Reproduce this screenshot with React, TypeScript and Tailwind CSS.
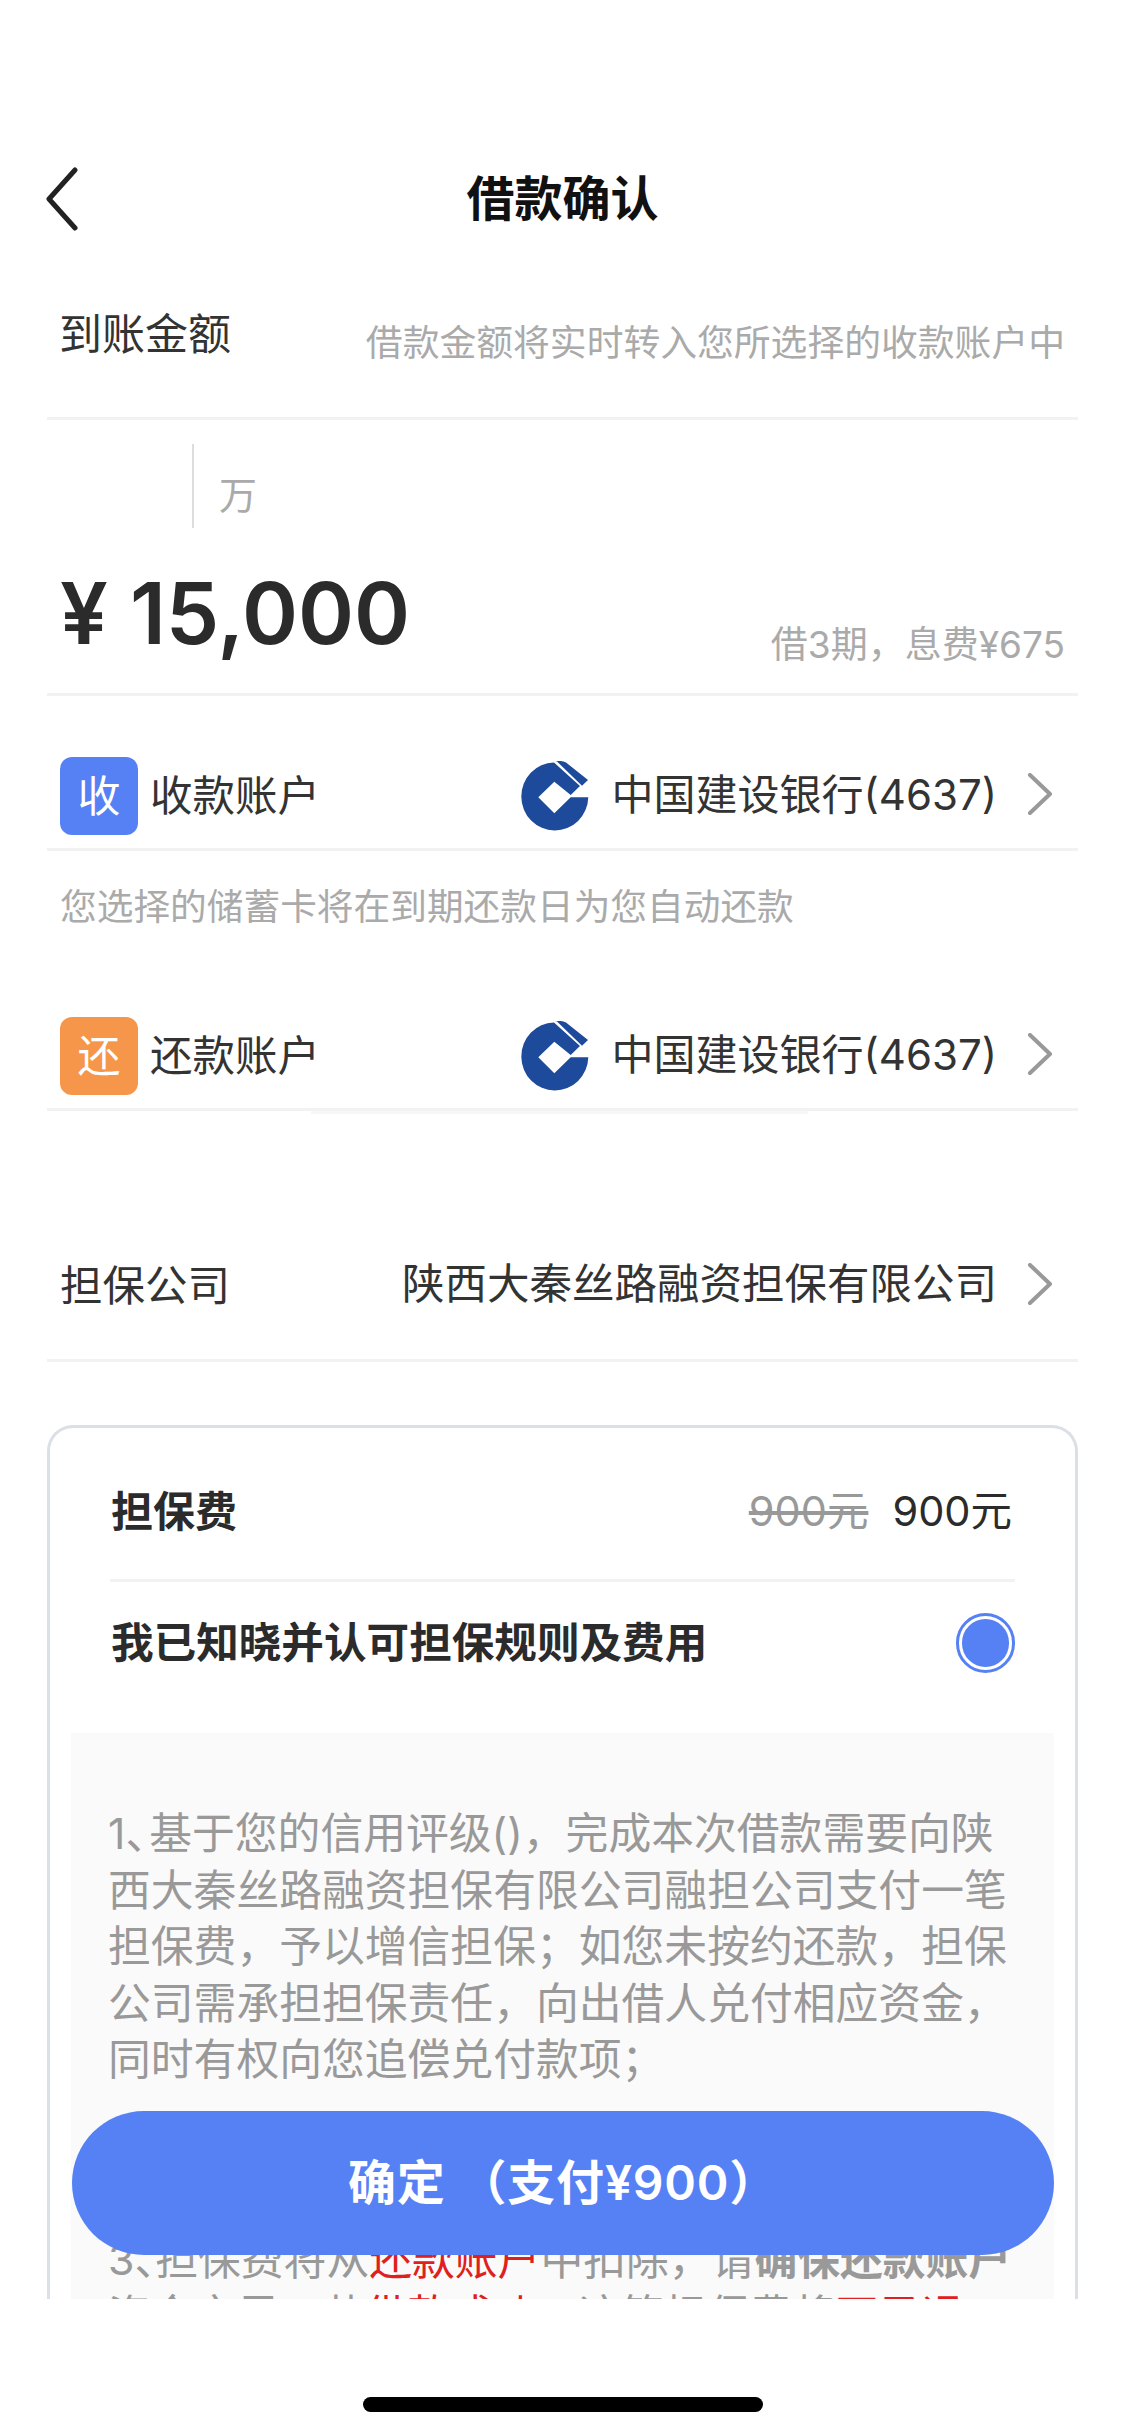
const cjk = "font-['Inter','Noto_Sans_CJK_SC',sans-serif]";

function Chevron() {
  return (
    <svg width="26" height="42" viewBox="0 0 26 42" fill="none" className="mb-[5px] shrink-0">
      <path d="M3 2l20 19L3 40" stroke="#999999" strokeWidth="4" strokeLinecap="round" strokeLinejoin="round" />
    </svg>
  );
}

function BankLogo() {
  return (
    <svg width="68" height="70" viewBox="0 0 68 70" className="shrink-0">
      <path
        fillRule="evenodd"
        fill="#1d4a9b"
        d="M67.3 36.3A33.5 34 0 1 1 33 1.5L59 25 49.7 34 33.3 20.7 17.3 36.3 33.3 52.3 49.7 36.3Z"
      />
      <path fill="#1d4a9b" d="M34 .5Q40-1 45 1.5L67 19 61 24.7 36 .5Z" />
    </svg>
  );
}

function Divider() {
  return <div className="h-[3px] bg-[#f2f2f2]" />;
}

function BankRow({ badge, badgeColor, label }: { badge: string; badgeColor: string; label: string }) {
  return (
    <div className="flex h-[104px] items-center pl-[13px] pr-[25px]">
      <span className={`flex h-[78px] w-[78px] items-center justify-center rounded-[12px] text-[43px] text-white ${badgeColor}`}>
        {badge}
      </span>
      <span className="ml-[12px] text-[42.5px] text-[#333333]">{label}</span>
      <div className="ml-auto flex items-center">
        <BankLogo />
        <span className="mb-[3px] ml-[22px] mr-[30px] text-[42px] leading-none text-[#333333]">中国建设银行(4637)</span>
        <Chevron />
      </div>
    </div>
  );
}

export default function App() {
  return (
    <div className={`relative h-[2435px] w-[1125px] overflow-hidden bg-white ${cjk}`}>
      <div className="h-[2299px] overflow-hidden">
        {/* Nav bar */}
        <header className="relative mt-[135px] flex h-[128px] items-center justify-center">
          <svg width="34" height="64" viewBox="0 0 34 64" fill="none" className="absolute left-[45px] top-[32px]">
            <path d="M30 3L4 32l26 29" stroke="#222222" strokeWidth="5" strokeLinecap="round" strokeLinejoin="round" />
          </svg>
          <h1 className="text-[48px] font-bold text-[#111111]">借款确认</h1>
        </header>

        <main className="mx-[47px]">
          {/* Amount */}
          <div className="flex h-[154px] items-start justify-between pl-[12px] pr-[13px]">
            <span className="mt-[43px] text-[43px] leading-[56px] text-[#333333]">到账金额</span>
            <span className="mt-[55px] text-[36.8px] leading-[50px] text-[#aaaaaa]">借款金额将实时转入您所选择的收款账户中</span>
          </div>
          <Divider />
          <div className="ml-[145px] mt-[24px] flex h-[84px] items-center border-l-2 border-[#dddddd] pl-[25px]">
            <span className="mt-[18px] text-[38px] text-[#aaaaaa]">万</span>
          </div>
          <div className="flex h-[165px] items-start justify-between px-[13px]">
            <span className="mt-[36px] flex items-center text-[85px] font-semibold leading-[100px] text-[#2b2b2b]">
              <span className="mr-[22px]">¥</span>15,000
            </span>
            <span className="mt-[92px] text-[37px] leading-[50px] text-[#aaaaaa]">借3期，息费¥675</span>
          </div>
          <Divider />

          {/* Accounts */}
          <div className="mt-[48px]">
            <BankRow badge="收" badgeColor="bg-[#5681f5]" label="收款账户" />
            <Divider />
          </div>
          <p className="ml-[13px] mt-[31px] text-[36.7px] leading-[50px] text-[#aaaaaa]">您选择的储蓄卡将在到期还款日为您自动还款</p>
          <div className="mt-[72px]">
            <BankRow badge="还" badgeColor="bg-[#f5964a]" label="还款账户" />
            <Divider />
            <div className="ml-[264px] h-[3px] w-[497px] bg-[#f7f7f7]" />
          </div>

          {/* Guarantor */}
          <div className="mt-[122px] flex h-[100px] items-center pl-[13px] pr-[25px]">
            <span className="text-[42.5px] text-[#333333]">担保公司</span>
            <span className="mb-[3px] ml-auto mr-[30px] text-[42.5px] leading-none text-[#333333]">陕西大秦丝路融资担保有限公司</span>
            <Chevron />
          </div>
          <div className="mt-[23px]">
            <Divider />
          </div>

          {/* Fee card */}
          <section className="mt-[63px] rounded-t-[26px] border-x-[3px] border-t-[3px] border-[#dbe0e6] pb-[400px]">
            <div className="mx-[60px] flex h-[154px] items-center justify-between border-b-[3px] border-[#f2f2f2] pt-[16px]">
              <span className="ml-[1px] text-[42px] font-semibold text-[#2b2b2b]">担保费</span>
              <span className="mr-[3px] flex items-center text-[41.5px] leading-none">
                <span className="text-[#999999] line-through">900元</span>
                <span className="ml-[24px] text-[#2b2b2b]">900元</span>
              </span>
            </div>
            <div className="mx-[60px] flex h-[122px] items-center justify-between">
              <span className="ml-[1px] text-[42.6px] font-semibold text-[#2b2b2b]">我已知晓并认可担保规则及费用</span>
              <span className="h-[60px] w-[59px] rounded-full border-[3px] border-[#5681f5] p-[3px]">
                <span className="block h-full w-full rounded-full bg-[#5681f5]" />
              </span>
            </div>
            <div className="mx-[21px] mt-[29px] bg-[#fafafa] px-[37px] pb-[40px] pt-[73px] text-[42.8px] leading-[56.5px] text-[#999999]">
              <p>1<span className="mr-[-19px]">、</span>基于您的信用评级()，完成本次借款需要向陕西大秦丝路融资担保有限公司融担公司支付一笔担保费，予以增信担保；如您未按约还款，担保公司需承担担保责任，向出借人兑付相应资金，同时有权向您追偿兑付款项；</p>
              <p className="mt-[143px]">
                3<span className="mr-[-22px]">、</span>担保费将从<span className="text-[#e02020]">还款账户</span>中扣除，请<span className="font-semibold">确保还款账户</span>
                <br />
                资金充足，若<span className="text-[#e02020]">借款成功</span>，这笔担保费将<span className="text-[#e02020]">不予退</span>
              </p>
            </div>
          </section>
        </main>
      </div>

      {/* Fixed bottom */}
      <button className="absolute left-[72px] top-[2111px] flex h-[144px] w-[982px] items-center justify-center rounded-full bg-[#5681f5] text-[48px] font-semibold tracking-[0.8px] text-white">
        确定 （支付¥900）
      </button>
      <div className="absolute left-[363px] top-[2397px] h-[15px] w-[400px] rounded-full bg-black" />
    </div>
  );
}
